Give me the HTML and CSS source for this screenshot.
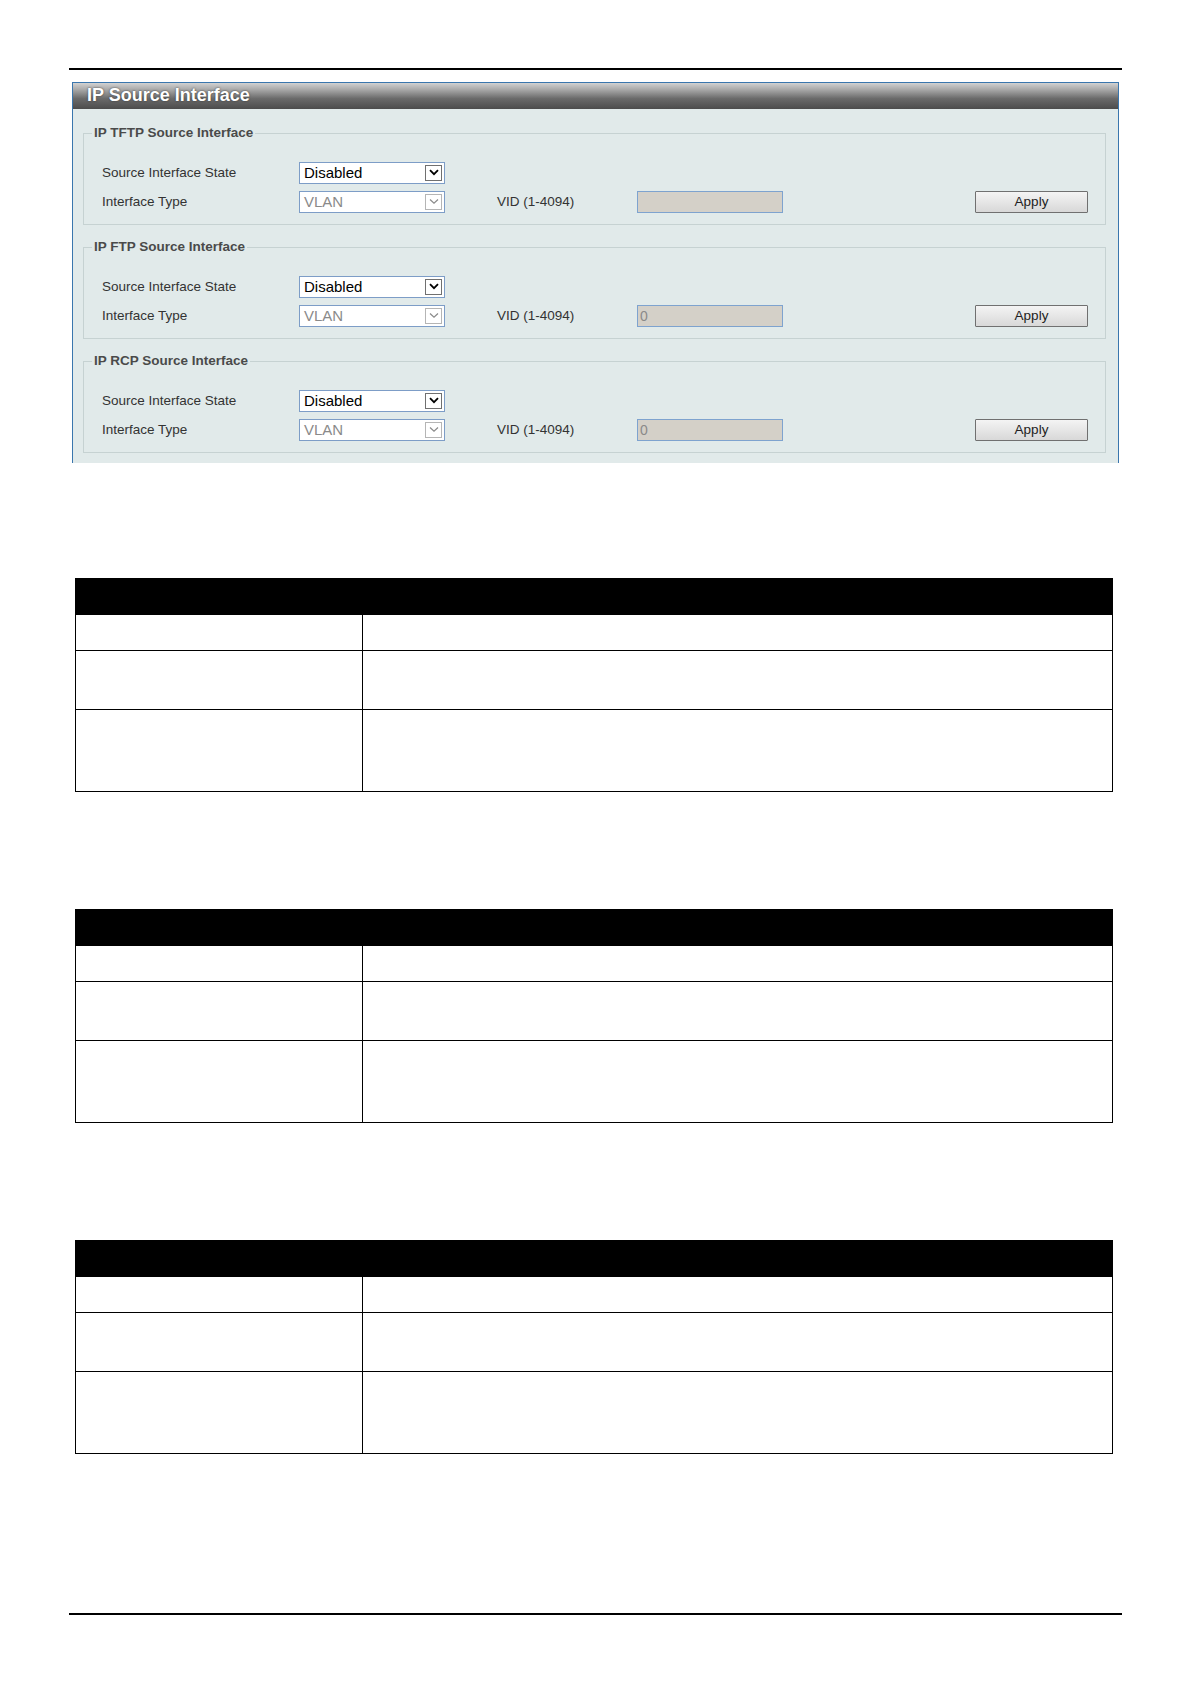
FILE: index.html
```html
<!DOCTYPE html>
<html lang="en">
<head>
<meta charset="utf-8">
<title>IP Source Interface</title>
<link rel="stylesheet" href="styles.css">
</head>
<body>
<div class="page">
  <div class="rule"></div>

  <section class="panel">
    <div class="panel-head">IP Source Interface</div>
    <div class="panel-body">

      <fieldset class="group">
        <legend>IP TFTP Source Interface</legend>
        <div class="row">
          <span class="label">Source Interface State</span>
          <div class="select">
            <span class="select-text">Disabled</span>
            <span class="select-btn"><svg viewBox="0 0 10 7" width="10" height="7"><path d="M1 1.2 L5 5.2 L9 1.2" fill="none" stroke="#000" stroke-width="1.8"/></svg></span>
          </div>
        </div>
        <div class="row">
          <span class="label">Interface Type</span>
          <div class="select is-disabled">
            <span class="select-text">VLAN</span>
            <span class="select-btn"><svg viewBox="0 0 10 7" width="10" height="7"><path d="M1 1.5 L5 5.2 L9 1.5" fill="none" stroke="#8a8a8a" stroke-width="1.2"/></svg></span>
          </div>
          <span class="label vid">VID (1-4094)</span>
          <div class="field"></div>
          <button class="btn" type="button">Apply</button>
        </div>
      </fieldset>

      <fieldset class="group">
        <legend>IP FTP Source Interface</legend>
        <div class="row">
          <span class="label">Source Interface State</span>
          <div class="select">
            <span class="select-text">Disabled</span>
            <span class="select-btn"><svg viewBox="0 0 10 7" width="10" height="7"><path d="M1 1.2 L5 5.2 L9 1.2" fill="none" stroke="#000" stroke-width="1.8"/></svg></span>
          </div>
        </div>
        <div class="row">
          <span class="label">Interface Type</span>
          <div class="select is-disabled">
            <span class="select-text">VLAN</span>
            <span class="select-btn"><svg viewBox="0 0 10 7" width="10" height="7"><path d="M1 1.5 L5 5.2 L9 1.5" fill="none" stroke="#8a8a8a" stroke-width="1.2"/></svg></span>
          </div>
          <span class="label vid">VID (1-4094)</span>
          <div class="field">0</div>
          <button class="btn" type="button">Apply</button>
        </div>
      </fieldset>

      <fieldset class="group">
        <legend>IP RCP Source Interface</legend>
        <div class="row">
          <span class="label">Source Interface State</span>
          <div class="select">
            <span class="select-text">Disabled</span>
            <span class="select-btn"><svg viewBox="0 0 10 7" width="10" height="7"><path d="M1 1.2 L5 5.2 L9 1.2" fill="none" stroke="#000" stroke-width="1.8"/></svg></span>
          </div>
        </div>
        <div class="row">
          <span class="label">Interface Type</span>
          <div class="select is-disabled">
            <span class="select-text">VLAN</span>
            <span class="select-btn"><svg viewBox="0 0 10 7" width="10" height="7"><path d="M1 1.5 L5 5.2 L9 1.5" fill="none" stroke="#8a8a8a" stroke-width="1.2"/></svg></span>
          </div>
          <span class="label vid">VID (1-4094)</span>
          <div class="field">0</div>
          <button class="btn" type="button">Apply</button>
        </div>
      </fieldset>

    </div>
  </section>

  <div class="spec first">
    <div class="spec-head"></div>
    <div class="spec-row h1"><div class="cell"></div><div class="cell"></div></div>
    <div class="spec-row h2"><div class="cell"></div><div class="cell"></div></div>
    <div class="spec-row h3"><div class="cell"></div><div class="cell"></div></div>
  </div>

  <div class="spec">
    <div class="spec-head"></div>
    <div class="spec-row h1"><div class="cell"></div><div class="cell"></div></div>
    <div class="spec-row h2"><div class="cell"></div><div class="cell"></div></div>
    <div class="spec-row h3"><div class="cell"></div><div class="cell"></div></div>
  </div>

  <div class="spec">
    <div class="spec-head"></div>
    <div class="spec-row h1"><div class="cell"></div><div class="cell"></div></div>
    <div class="spec-row h2"><div class="cell"></div><div class="cell"></div></div>
    <div class="spec-row h3"><div class="cell"></div><div class="cell"></div></div>
  </div>

  <div class="rule bottom"></div>
</div>
</body>
</html>
```

FILE: styles.css
```css
html, body {
  margin: 0;
  padding: 0;
  background: #fff;
}

body {
  font-family: "Liberation Sans", Arial, sans-serif;
  color: #333;
}

.page {
  width: 1053px;
  margin-left: 69px;
  padding-top: 68px;
}

.rule {
  height: 2px;
  background: #000;
}

.rule.bottom {
  margin-top: 159px;
}

/* ---------- configuration panel ---------- */

.panel {
  width: 1045px;
  margin: 12px 0 0 3px;
  border: 1px solid #3a76ad;
  border-bottom: 0;
  background: #e1eaea;
}

.panel-head {
  height: 26px;
  padding-left: 14px;
  background: linear-gradient(#d2d2d2 0%, #a9a9a9 25%, #6a6a6a 60%, #4c4c4c 100%);
  color: #fff;
  font-weight: bold;
  font-size: 18px;
  line-height: 24px;
  text-shadow: 0 0 2px #333;
}

.panel-body {
  padding: 17px 12px 10px 10px;
}

.group {
  margin: 0 0 15px 0;
  padding: 21px 17px 11px 8px;
  border: 1px solid #c6d2d2;
  min-width: 0;
}

.group:last-child {
  margin-bottom: 0;
}

.group legend {
  padding: 0 2px;
  font-size: 13.5px;
  line-height: 14px;
  font-weight: bold;
  color: #4a4a4a;
}

.row {
  display: flex;
  align-items: center;
  height: 23px;
  margin-left: 10px;
}

.row + .row {
  margin-top: 6px;
}

.label {
  width: 197px;
  font-size: 13.5px;
  color: #333;
  flex: none;
}

.label.vid {
  width: 140px;
  margin-left: 52px;
}

/* drop-down box */
.select {
  box-sizing: border-box;
  width: 146px;
  height: 22px;
  flex: none;
  display: flex;
  align-items: center;
  justify-content: space-between;
  border: 1px solid #7d9dc7;
  background: #fff;
  padding: 0 2px 0 4px;
}

.select-text {
  font-size: 15px;
  color: #000;
  line-height: 20px;
}

.select-btn {
  box-sizing: border-box;
  width: 17px;
  height: 16px;
  display: flex;
  align-items: center;
  justify-content: center;
  border: 1px solid #707070;
  background: #fff;
}

.select.is-disabled .select-text {
  color: #8a8a8a;
}

.select.is-disabled .select-btn {
  border-color: #b5b5b5;
}

/* read-only text box */
.field {
  box-sizing: border-box;
  width: 146px;
  height: 22px;
  flex: none;
  border: 1px solid #7ea3cf;
  background: #d4d0c8;
  padding-left: 2px;
  font-size: 14px;
  line-height: 20px;
  color: #8a8a8a;
}

.btn {
  box-sizing: border-box;
  width: 113px;
  height: 22px;
  margin-left: auto;
  flex: none;
  border: 1px solid #707070;
  border-radius: 1px;
  background: linear-gradient(#f4f4f4, #e6e6e6 50%, #d8d8d8);
  font-family: "Liberation Sans", Arial, sans-serif;
  font-size: 13.5px;
  color: #222;
  padding: 0;
}

/* ---------- parameter tables ---------- */

.spec {
  width: 1038px;
  margin: 117px 0 0 6px;
  border: 1px solid #000;
  box-sizing: border-box;
}

.spec.first {
  margin-top: 115px;
}

.spec-head {
  height: 35px;
  background: #000;
}

.spec-row {
  display: grid;
  grid-template-columns: 287px 1fr;
  border-top: 1px solid #000;
}

.spec-row .cell:first-child {
  border-right: 1px solid #000;
}

.spec-row.h1 { height: 35px; }
.spec-row.h2 { height: 58px; }
.spec-row.h3 { height: 81px; }
```
